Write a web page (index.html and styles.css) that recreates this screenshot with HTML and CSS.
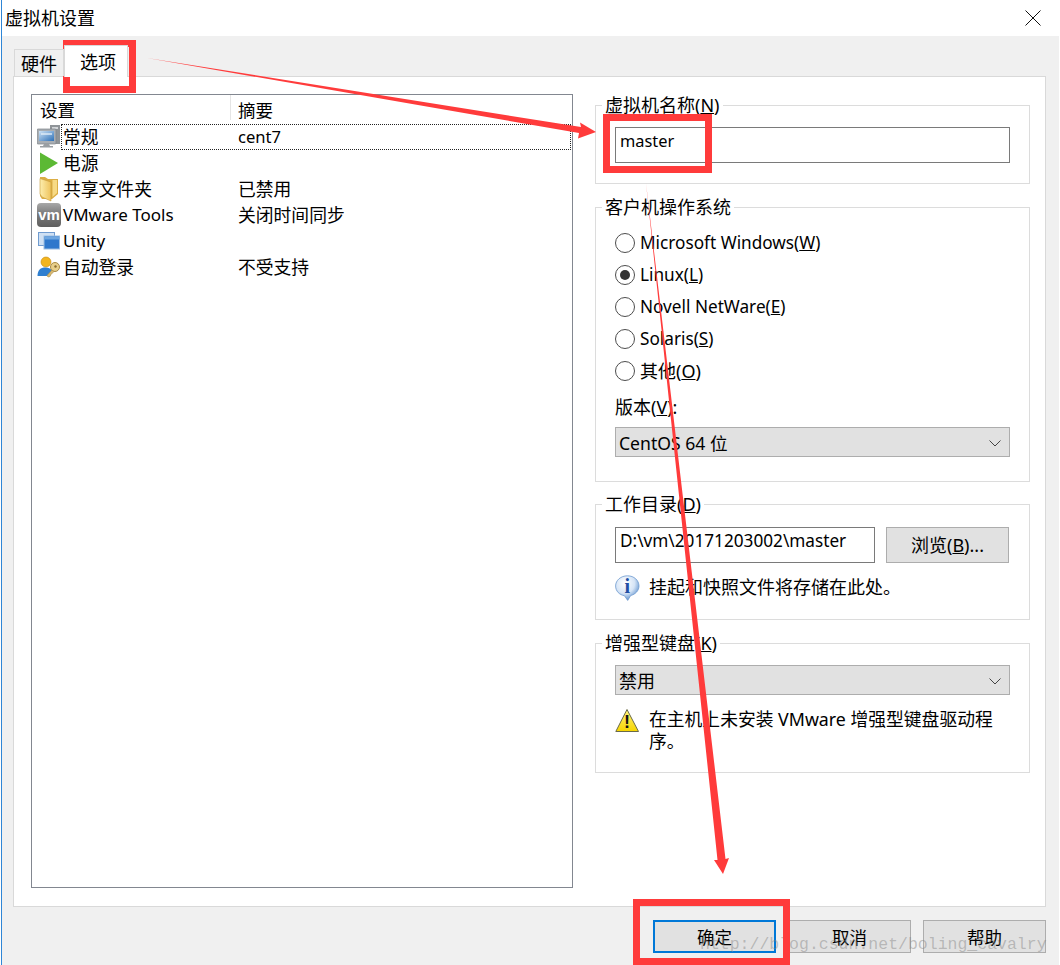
FILE: index.html
```html
<!DOCTYPE html>
<html lang="zh-CN">
<head>
<meta charset="utf-8">
<title>虚拟机设置</title>
<link rel="stylesheet" href="styles.css">
</head>
<body>
<div class="window">
  <header class="titlebar">
    <span class="title">虚拟机设置</span>
    <svg class="close" width="16" height="16" viewBox="0 0 16 16"><path d="M0.5 0.5L15.5 15.5M15.5 0.5L0.5 15.5" stroke="#111" stroke-width="1" fill="none"/></svg>
  </header>
  <div class="dialog">
    <nav class="tabs">
      <div class="tab">硬件</div>
      <div class="tab tab-active">选项</div>
    </nav>
    <main class="panel">
      <section class="list">
        <div class="list-head">
          <div class="head-cell head-setting">设置</div>
          <div class="head-cell head-summary">摘要</div>
        </div>
        <div class="row">
          <svg class="row-icon" width="24" height="26" viewBox="0 0 24 26">
            <defs><linearGradient id="scr" x1="0" y1="0" x2="1" y2="1"><stop offset="0" stop-color="#cfe3f5"/><stop offset="1" stop-color="#2c70b8"/></linearGradient></defs>
            <rect x="13" y="1" width="10" height="19" fill="#8f9498"/>
            <rect x="15" y="3" width="6" height="2" fill="#d4d7da"/>
            <rect x="0" y="5" width="19" height="15" rx="1" fill="#a9aeb3" stroke="#7d8286" stroke-width=".7"/>
            <rect x="2" y="7" width="15" height="10" fill="url(#scr)"/>
            <rect x="4" y="9" width="11" height="2" fill="#e2eef8" opacity=".7"/>
            <path d="M7 20h5l1 2h3v1.500H3V22h3z" fill="#9a9fa3"/>
          </svg>
          <div class="row-main row-focus"><span class="row-name">常规</span><span class="row-value row-latin">cent7</span></div>
        </div>
        <div class="row">
          <svg class="row-icon" width="24" height="26" viewBox="0 0 24 26"><path d="M3 2.500L21 13 3 24z" fill="#5cb934"/></svg>
          <div class="row-main"><span class="row-name">电源</span></div>
        </div>
        <div class="row">
          <svg class="row-icon" width="24" height="26" viewBox="0 0 24 26">
            <defs><linearGradient id="fol" x1="0" y1="0" x2="1" y2="0"><stop offset="0" stop-color="#fdeeae"/><stop offset="1" stop-color="#eec35c"/></linearGradient></defs>
            <path d="M3 1h5l3 2h10v15l-6 5H5l-2-3z" fill="#dcae45"/>
            <path d="M3 2.500l11 3.500v19l-9-4-2-3z" fill="url(#fol)" stroke="#c79a3a" stroke-width=".6"/>
            <path d="M15.500 4H20v13l-4.500 4z" fill="#f7da85"/>
          </svg>
          <div class="row-main"><span class="row-name">共享文件夹</span><span class="row-value">已禁用</span></div>
        </div>
        <div class="row">
          <svg class="row-icon" width="24" height="26" viewBox="0 0 24 26">
            <defs><linearGradient id="vmg" x1="0" y1="0" x2="0" y2="1"><stop offset="0" stop-color="#a8a8a8"/><stop offset=".45" stop-color="#7b7b7b"/><stop offset="1" stop-color="#5f5f5f"/></linearGradient></defs>
            <rect x="0" y="1" width="24" height="24" rx="4" fill="url(#vmg)"/>
            <text x="12" y="18" class="vm-text">vm</text>
          </svg>
          <div class="row-main"><span class="row-name row-latin">VMware Tools</span><span class="row-value">关闭时间同步</span></div>
        </div>
        <div class="row">
          <svg class="row-icon" width="24" height="26" viewBox="0 0 24 26">
            <rect x="1.500" y="4.500" width="16" height="13" fill="#cfe0f3" stroke="#6f9bd0"/>
            <rect x="7" y="8" width="15.500" height="13" fill="#2f78cc" stroke="#9bbde2"/>
            <rect x="7.500" y="8.500" width="15" height="3" fill="#6ea6e0"/>
          </svg>
          <div class="row-main"><span class="row-name row-latin">Unity</span></div>
        </div>
        <div class="row">
          <svg class="row-icon" width="24" height="26" viewBox="0 0 24 26">
            <circle cx="9" cy="8" r="5" fill="#f3b51e" stroke="#c58a10" stroke-width=".6"/>
            <path d="M0.500 22c0-6 3-8.500 8-8.500 3 0 5 1 6.500 3l-3 5.500z" fill="#2f7fd0"/>
            <circle cx="18" cy="13" r="4.500" fill="#e8cf8a" stroke="#a98a45"/>
            <circle cx="18.500" cy="12.500" r="1.200" fill="#8a6d2f"/>
            <path d="M15 16l-5 5.500 1 1.500 2-.5 1-2 3-3z" fill="#d8b970" stroke="#a98a45" stroke-width=".6"/>
          </svg>
          <div class="row-main"><span class="row-name">自动登录</span><span class="row-value">不受支持</span></div>
        </div>
      </section>
      <aside class="side">
        <fieldset class="group group-name">
          <legend>虚拟机名称(<u>N</u>)</legend>
          <div class="textbox textbox-name">master</div>
        </fieldset>
        <fieldset class="group group-os">
          <legend>客户机操作系统</legend>
          <div class="radio-row"><span class="radio"></span><span>Microsoft Windows(<u>W</u>)</span></div>
          <div class="radio-row"><span class="radio radio-on"></span><span>Linux(<u>L</u>)</span></div>
          <div class="radio-row"><span class="radio"></span><span>Novell NetWare(<u>E</u>)</span></div>
          <div class="radio-row"><span class="radio"></span><span>Solaris(<u>S</u>)</span></div>
          <div class="radio-row"><span class="radio"></span><span class="cjk">其他(<u>O</u>)</span></div>
          <div class="field-label cjk">版本(<u>V</u>):</div>
          <div class="combo"><span class="combo-os">CentOS 64 位</span><svg width="12" height="7" viewBox="0 0 12 7"><path d="M.5.500L6 6l5.500-5.500" fill="none" stroke="#444"/></svg></div>
        </fieldset>
        <fieldset class="group group-dir">
          <legend>工作目录(<u>D</u>)</legend>
          <div class="dir-row">
            <div class="textbox textbox-dir">D:\vm\20171203002\master</div>
            <div class="btn btn-browse cjk">浏览(<u>B</u>)...</div>
          </div>
          <div class="note note-info">
            <svg class="note-icon" width="26" height="26" viewBox="0 0 26 26">
              <defs><radialGradient id="inf" cx=".4" cy=".3" r=".75"><stop offset="0" stop-color="#fff"/><stop offset=".55" stop-color="#d5e4f6"/><stop offset="1" stop-color="#4f86c8"/></radialGradient></defs>
              <path d="M12.500 .8C5.800 .8 .6 5.300 .6 11c0 5.200 4 9 8.800 9.700l3.300 4.700 3-4.900c4.800-1.200 8.300-5 8.300-9.500C24 5.300 19 .8 12.500 .8z" fill="url(#inf)" stroke="#6f9bcf" stroke-width=".8"/>
              <text x="12.300" y="18" class="info-text">i</text>
            </svg>
            <span class="note-text note-text-info">挂起和快照文件将存储在此处。</span>
          </div>
        </fieldset>
        <fieldset class="group group-kbd">
          <legend>增强型键盘(<u>K</u>)</legend>
          <div class="combo"><span class="cjk">禁用</span><svg width="12" height="7" viewBox="0 0 12 7"><path d="M.5.500L6 6l5.500-5.500" fill="none" stroke="#444"/></svg></div>
          <div class="note note-warn">
            <svg class="note-icon" width="26" height="26" viewBox="0 0 26 26">
              <defs><linearGradient id="wrn" x1="0" y1="0" x2="0" y2="1"><stop offset="0" stop-color="#fff27a"/><stop offset="1" stop-color="#f6d500"/></linearGradient></defs>
              <path d="M12 1.500L23.500 23.500H.8z" fill="url(#wrn)" stroke="#6a6a4a" stroke-width="1" stroke-linejoin="round"/>
              <text x="12" y="20" class="warn-text">!</text>
            </svg>
            <span class="note-text">在主机上未安装 VMware 增强型键盘驱动程序。</span>
          </div>
        </fieldset>
      </aside>
    </main>
    <footer class="footer">
      <div class="btn btn-foot btn-default">确定</div>
      <div class="btn btn-foot">取消</div>
      <div class="btn btn-foot">帮助</div>
    </footer>
  </div>
  <div class="watermark">http://blog.csdn.net/boling_cavalry</div>
  <svg class="marks" width="1060" height="965" viewBox="0 0 1060 965">
    <g fill="none" stroke="#ff3b3b" stroke-width="7">
      <rect x="66.500" y="43.500" width="66" height="46"/>
      <rect x="606.500" y="117.500" width="102" height="52"/>
      <rect x="636.500" y="902.500" width="150" height="59"/>
    </g>
    <polygon fill="#ff3b3b" points="147,58 581,127 580,122.500 596,132 578,138.500 579,133"/>
    <polygon fill="#ff3b3b" points="646,183 725.500,859 729,858 723,874 714,860 717.500,860"/>
  </svg>
</div>
</body>
</html>
```

FILE: styles.css
```css
* { box-sizing: border-box; }
html, body { margin: 0; padding: 0; }
body {
  background: #fff;
  color: #000;
  font-family: "Noto Sans", "Noto Sans CJK SC", sans-serif;
  font-size: 17.200px;
  line-height: 24px;
}
.window {
  position: relative;
  width: 1060px;
  height: 965px;
  padding-left: 1px;
  padding-right: 1px;
  display: flex;
  flex-direction: column;
  overflow: hidden;
}
.titlebar {
  height: 36px;
  flex: none;
  display: flex;
  align-items: center;
  justify-content: space-between;
  padding: 0 18px 0 3px;
  border-left: 1px solid #2f86d6;
}
.title { font-size: 18px; }
.close { display: block; }
.dialog {
  flex: 1;
  display: flex;
  flex-direction: column;
  background: #f0f0f0;
  border-left: 1px solid #2f86d6;
  padding-left: 11px;
  padding-right: 13px;
}
.tabs {
  height: 40px;
  flex: none;
  display: flex;
  align-items: flex-end;
  position: relative;
  z-index: 1;
}
.tab {
  height: 27px;
  width: 50px;
  border: 1px solid #d9d9d9;
  border-bottom: 0;
  font-size: 18px;
  text-align: center;
  line-height: 28px;
  margin-left: 1px;
}
.tab-active {
  height: 32px;
  width: 64px;
  margin-left: 0;
  margin-bottom: -1px;
  background: #fff;
  line-height: 32px;
  padding-left: 4px;
}
.panel {
  height: 831px;
  flex: none;
  background: #fff;
  border: 1px solid #d9d9d9;
  padding: 17px 15px 18px 17px;
  display: flex;
  gap: 22px;
}
.list {
  width: 542px;
  flex: none;
  border: 1px solid #828790;
}
.list-head {
  height: 29px;
  display: flex;
}
.head-cell {
  font-size: 17.500px;
  line-height: 30px;
}
.head-setting { width: 199px; padding-left: 8px; border-right: 1px solid #e5e5e5; margin-bottom: 4px; }
.head-summary { padding-left: 7px; }
.row {
  height: 26px;
  display: flex;
  padding-left: 5px;
  padding-right: 1px;
}
.row-icon { flex: none; display: block; }
.row-main {
  flex: 1;
  display: flex;
  align-items: center;
  border: 1px dotted transparent;
  padding-left: 1px;
}
.row-focus { border-color: #222; }
.row-name { width: 175px; flex: none; font-size: 17.800px; }
.row-value { font-size: 17.800px; }
.row-name.row-latin { font-size: 17px; }
.row-value.row-latin { font-size: 16.600px; }
.vm-text {
  font-family: "Liberation Sans", sans-serif;
  font-size: 15px;
  font-weight: 700;
  fill: #fff;
  text-anchor: middle;
}
.side {
  width: 435px;
  flex: none;
  display: flex;
  flex-direction: column;
  gap: 11px;
}
.group {
  margin: 0;
  min-width: 0;
  border: 1px solid #dcdcdc;
  padding: 9px 19px 20px;
}
.group legend {
  margin-left: -13px;
  padding: 0 3px;
  height: 24px;
  font-size: 18px;
  line-height: 24px;
}
.cjk { font-size: 18px; }
.group-name { margin-top: -1px; padding-top: 10px; }
.group-os { padding-top: 8px; padding-bottom: 24px; }
.group-dir { margin-top: -1px; padding-top: 11px; padding-bottom: 0; height: 128px; }
.group-kbd { padding-top: 10px; height: 142px; }
.textbox {
  height: 36px;
  border: 1px solid #7a7a7a;
  background: #fff;
  padding: 0 4px;
  line-height: 26px;
}
.textbox-name { font-size: 16.400px; }
.radio-row {
  height: 32px;
  display: flex;
  align-items: center;
  gap: 5px;
}
.radio {
  position: relative;
  width: 20px;
  height: 20px;
  flex: none;
  border: 1px solid #4d4d4d;
  border-radius: 50%;
  background: #fff;
}
.radio-on::after {
  content: "";
  position: absolute;
  inset: 4px;
  border-radius: 50%;
  background: #333;
}
.field-label { margin-top: 8px; height: 24px; }
.combo {
  height: 30px;
  margin-top: 8px;
  border: 1px solid #adadad;
  background: #e1e1e1;
  display: flex;
  align-items: center;
  justify-content: space-between;
  padding: 2px 8px 0 3px;
}
.combo-os { font-size: 17.600px; }
.group-kbd .combo { margin-top: 0; }
.dir-row {
  display: flex;
  gap: 11px;
}
.textbox-dir { width: 260px; flex: none; }
.btn {
  background: #e1e1e1;
  border: 1px solid #adadad;
  display: flex;
  align-items: center;
  justify-content: center;
}
.btn-browse { width: 123px; height: 36px; }
.note {
  display: flex;
  align-items: flex-start;
  gap: 8px;
  line-height: 22px;
}
.note-icon { flex: none; display: block; }
.note-text { font-size: 17.800px; }
.note-text-info { font-size: 18px; }
.note-info { margin-top: 12px; line-height: 24px; }
.note-warn { margin-top: 13px; }
.info-text {
  font-family: "Liberation Serif", serif;
  font-size: 20px;
  font-weight: 700;
  fill: #1f4fa3;
  text-anchor: middle;
}
.warn-text {
  font-family: "Liberation Sans", sans-serif;
  font-size: 18px;
  font-weight: 700;
  fill: #111;
  text-anchor: middle;
}
.footer {
  flex: 1;
  display: flex;
  justify-content: flex-end;
  align-items: flex-start;
  gap: 12px;
  padding-top: 13px;
}
.btn-foot { width: 123px; height: 33px; font-size: 17.500px; }
.btn-default { border: 2px solid #0078d7; }
.watermark {
  position: absolute;
  left: 700px;
  top: 933px;
  font-family: "Liberation Mono", monospace;
  font-size: 16.500px;
  line-height: 24px;
  color: rgba(130, 130, 130, 0.45);
  white-space: nowrap;
}
.marks {
  position: absolute;
  left: 0;
  top: 0;
  pointer-events: none;
}
```
